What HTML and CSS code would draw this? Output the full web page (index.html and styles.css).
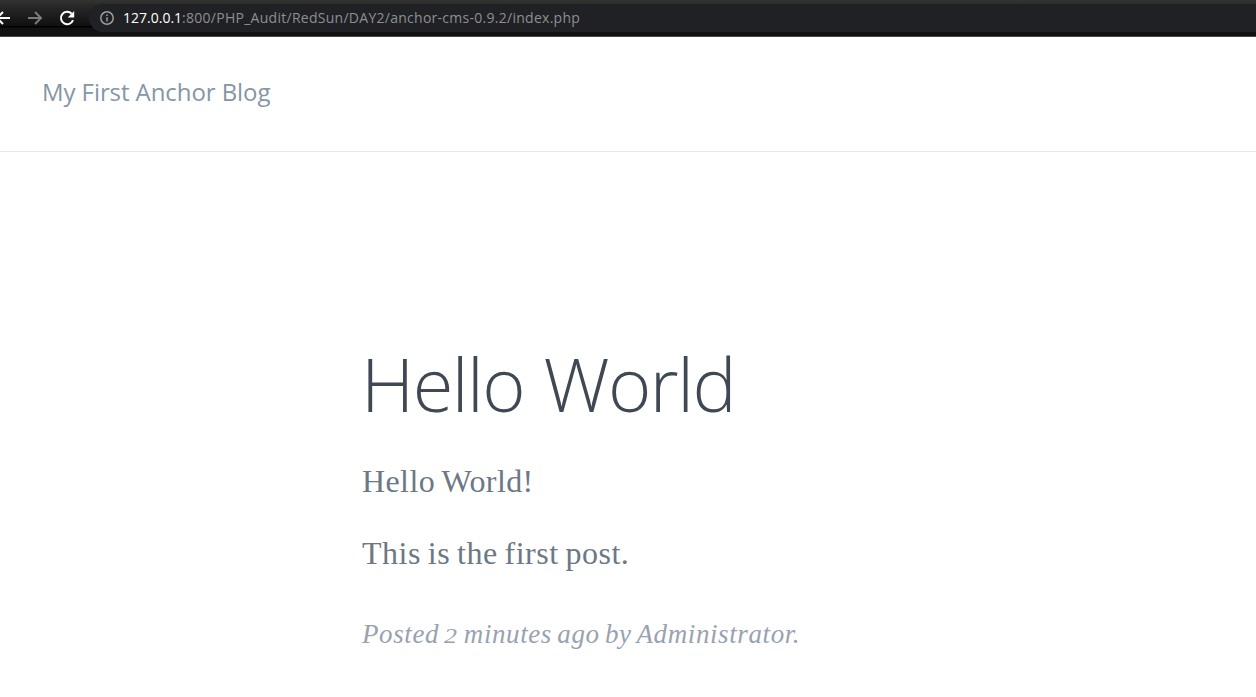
FILE: index.html
```html
<!DOCTYPE html>
<html lang="en">
<head>
<meta charset="utf-8">
<title>My First Anchor Blog</title>
<link rel="stylesheet" href="styles.css">
</head>
<body>
<div class="toolbar">
  <div class="nav">
    <svg class="icon back" viewBox="0 0 16 16"><path d="M15 8H2M8 2L2 8l6 6"/></svg>
    <svg class="icon forward" viewBox="0 0 16 16"><path d="M1 8h13M8 2l6 6-6 6"/></svg>
    <svg class="icon reload" viewBox="0 0 16 16"><path d="M14 10.2A6.2 6.2 0 1 1 12.7 3.8"/><path class="tip" d="M15.2 1v6.5H8.7z"/></svg>
  </div>
  <div class="address">
    <svg class="info" viewBox="0 0 14 14"><circle cx="7" cy="7" r="6.2"/><path d="M7 6.2v4.3M7 3.5v1.5"/></svg>
    <div class="url"><span class="host">127.0.0.1</span><span class="path">:800/PHP_Audit/RedSun/DAY2/anchor-cms-0.9.2/index.php</span></div>
  </div>
</div>
<header class="site-header"><a class="site-name">My First Anchor Blog</a></header>
<main class="article">
  <h1 class="title">Hello World</h1>
  <p class="text greeting">Hello World!</p>
  <p class="text first">This is the first post.</p>
  <footer class="meta">Posted <span class="digit">2</span> minutes ago by Administrator.</footer>
</main>
</body>
</html>
```

FILE: styles.css
```css
* { box-sizing: border-box; }
body { margin: 0; height: 697px; overflow: hidden; background: #fff; }
.toolbar {
  display: flex;
  height: 37px;
  padding-top: 4px;
  border-bottom: 1px solid #48484a;
  background: linear-gradient(#343432 0, #292929 5px, #101010 26px, #000 26px, #000 27px, #111 28px, #111 100%);
}
.nav { display: flex; width: 89px; height: 28px; align-items: center; flex: none; }
.icon { width: 16px; height: 16px; flex: none; fill: none; stroke: #fff; stroke-width: 2; }
.back { margin-left: -5px; }
.forward { margin-left: 16px; stroke: #7b7b7b; }
.reload { margin-left: 16px; }
.tip { fill: #fff; stroke: none; }
.address {
  display: flex;
  flex: 1;
  height: 28px;
  align-items: center;
  padding-left: 11px;
  border-radius: 14px 0 0 14px;
  background: #202124;
}
.info { width: 14px; height: 14px; fill: none; stroke: #9a9da1; stroke-width: 1.5; }
.url { margin-left: 9px; font: 14px/28px "Open Sans", sans-serif; white-space: nowrap; }
.host { color: #fff; }
.path { color: #8d8f93; letter-spacing: 0.27px; }
.site-header { height: 115px; padding: 35px 0 0 42px; border-bottom: 1px solid #e5e7e9; }
.site-name { font: 24px/40px "Open Sans", sans-serif; letter-spacing: -0.08px; color: #8596a6; }
.article { padding: 179px 0 0 362px; }
.title { margin: 0 0 0 -1px; font: 300 74px/106px "Open Sans", sans-serif; letter-spacing: -1.5px; word-spacing: 1.5px; color: #3f4853; white-space: nowrap; }
.text { margin: 0; font: 32px/40px "Liberation Serif", serif; word-spacing: -1.5px; color: #6c7885; white-space: nowrap; }
.greeting { margin-top: 24px; letter-spacing: 0.4px; }
.first { margin-top: 32px; letter-spacing: 0.48px; }
.meta { margin-top: 41px; font: italic 27px/40px "Liberation Serif", serif; letter-spacing: 0.6px; word-spacing: -2px; color: #98a2b1; white-space: nowrap; }
.digit { display: inline-block; width: 14px; font-size: 20px; line-height: 20px; letter-spacing: 0; transform: scaleX(1.3); transform-origin: left; }
```
